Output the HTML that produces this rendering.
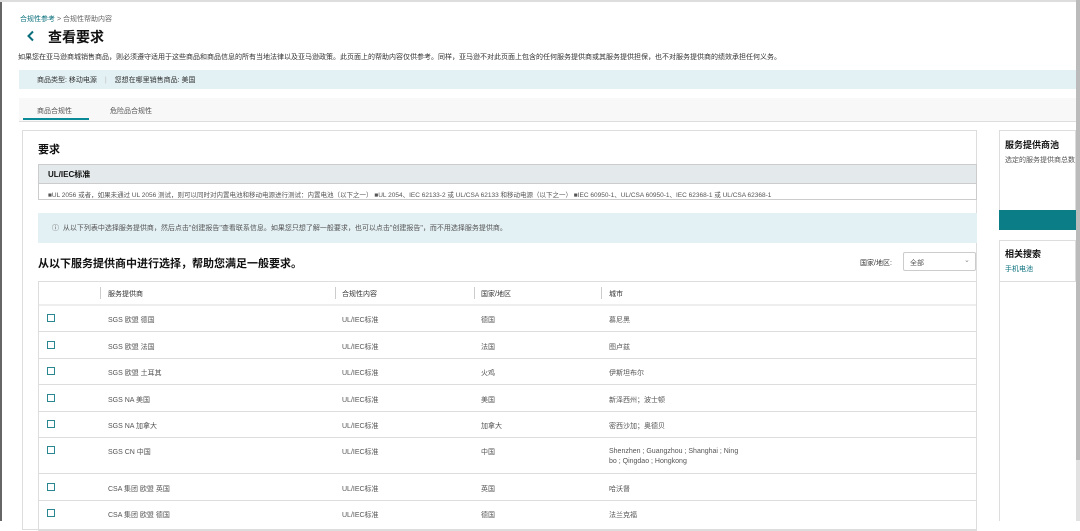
<!DOCTYPE html>
<html><head><meta charset="utf-8"><style>
*{box-sizing:border-box;margin:0;padding:0}
body{width:1080px;height:521px;overflow:hidden;background:#fff;font-family:"Liberation Sans","Noto Sans CJK SC",sans-serif;color:#111;position:relative;font-size:7px}
.a{position:absolute;white-space:nowrap}
.t{color:#555}
.cb{position:absolute;width:8px;height:8px;border:1.3px solid #2a8690}
</style></head><body>
<div class="a" style="left:0;top:0;width:2px;height:521px;background:#666"></div>
<div class="a" style="left:0;top:0;width:1080px;height:2px;background:#ddd"></div>
<div class="a" style="left:1076px;top:0;width:4px;height:460px;background:#bbb"></div>
<div class="a" style="left:1076px;top:460px;width:4px;height:61px;background:#e2e2e2"></div>
<div class="a" style="left:20px;top:14px;color:#0a6f7c">合规性参考 <span style="color:#666">&gt; 合规性帮助内容</span></div>
<svg class="a" style="left:26px;top:30px" width="10" height="12" viewBox="0 0 10 12"><path d="M7 1.5 L2.5 6 L7 10.5" fill="none" stroke="#0a6f7c" stroke-width="2"/></svg>
<div class="a" style="left:48px;top:27px;font-size:14px;font-weight:bold">查看要求</div>
<div class="a t" style="left:18px;top:52px;color:#333">如果您在亚马逊商城销售商品，则必须遵守适用于这些商品和商品信息的所有当地法律以及亚马逊政策。此页面上的帮助内容仅供参考。同样，亚马逊不对此页面上包含的任何服务提供商或其服务提供担保，也不对服务提供商的绩效承担任何义务。</div>
<div class="a" style="left:19px;top:70px;width:1057px;height:19px;background:#e3f0f4"></div>
<div class="a" style="left:37px;top:75px;color:#333">商品类型: 移动电源 <span style="color:#bbb;margin:0 6px">|</span> 您想在哪里销售商品: 美国</div>
<div class="a" style="left:19px;top:98px;width:1057px;height:24px;background:#f8f8f8;border-bottom:1px solid #ddd"></div>
<div class="a t" style="left:37px;top:106px">商品合规性</div>
<div class="a t" style="left:110px;top:106px">危险品合规性</div>
<div class="a" style="left:23px;top:118px;width:66px;height:2px;background:#0a8a96"></div>
<div class="a" style="left:22px;top:130px;width:955px;height:400px;border:1px solid #ddd"></div>
<div class="a" style="left:38px;top:141px;font-size:11px;font-weight:bold">要求</div>
<div class="a" style="left:38px;top:164px;width:939px;height:36px;border:1px solid #ccc"></div>
<div class="a" style="left:39px;top:165px;width:937px;height:19px;background:#e4e9eb;border-bottom:1px solid #ccc"></div>
<div class="a" style="left:48px;top:169px;font-size:8px;font-weight:bold">UL/IEC标准</div>
<div class="a t" style="left:48px;top:189px;font-size:6.5px">■UL 2056 或者，如果未通过 UL 2056 测试，则可以同时对内置电池和移动电源进行测试：内置电池（以下之一） ■UL 2054、IEC 62133-2 或 UL/CSA 62133 和移动电源（以下之一） ■IEC 60950-1、UL/CSA 60950-1、IEC 62368-1 或 UL/CSA 62368-1</div>
<div class="a" style="left:38px;top:213px;width:939px;height:30px;background:#e3f0f4"></div>
<div class="a t" style="left:52px;top:223px">ⓘ&nbsp; 从以下列表中选择服务提供商，然后点击"创建报告"查看联系信息。如果您只想了解一般要求，也可以点击"创建报告"，而不用选择服务提供商。</div>
<div class="a" style="left:38px;top:255px;font-size:11px;font-weight:bold">从以下服务提供商中进行选择，帮助您满足一般要求。</div>
<div class="a" style="left:860px;top:258px;color:#333">国家/地区:</div>
<div class="a" style="left:903px;top:252px;width:73px;height:19px;border:1px solid #ccc;border-radius:2px"></div>
<div class="a t" style="left:910px;top:258px">全部</div>
<div class="a" style="left:964px;top:256px;color:#888">⌄</div>
<div class="a" style="left:38px;top:281px;width:939px;height:250px;border:1px solid #ddd"></div>
<div class="a" style="left:39px;top:304px;width:937px;height:2px;background:#eee"></div>
<div class="a t" style="left:108px;top:289px;color:#333">服务提供商</div>
<div class="a t" style="left:342px;top:289px;color:#333">合规性内容</div>
<div class="a t" style="left:481px;top:289px;color:#333">国家/地区</div>
<div class="a t" style="left:609px;top:289px;color:#333">城市</div>
<div class="a" style="left:100px;top:287px;width:1px;height:12px;background:#ccc"></div>
<div class="a" style="left:335px;top:287px;width:1px;height:12px;background:#ccc"></div>
<div class="a" style="left:474px;top:287px;width:1px;height:12px;background:#ccc"></div>
<div class="a" style="left:601px;top:287px;width:1px;height:12px;background:#ccc"></div>
<div class="a" style="left:999px;top:130px;width:77px;height:100px;border:1px solid #ddd"></div>
<div class="a" style="left:1005px;top:138px;font-size:9px;font-weight:bold">服务提供商池</div>
<div class="a t" style="left:1005px;top:155px;width:70px;overflow:hidden">选定的服务提供商总数</div>
<div class="a" style="left:999px;top:210px;width:77px;height:20px;background:#0b7d86"></div>
<div class="a" style="left:999px;top:240px;width:77px;height:42px;border:1px solid #ddd"></div>
<div class="a" style="left:1005px;top:247px;font-size:9px;font-weight:bold">相关搜索</div>
<div class="a" style="left:1005px;top:264px;color:#0a6f7c">手机电池</div>
<div class="a" style="left:999px;top:282px;width:1px;height:239px;background:#ddd"></div>

<div class="a" style="left:39px;top:331px;width:937px;height:1px;background:#ddd"></div>
<div class="a" style="left:39px;top:358px;width:937px;height:1px;background:#ddd"></div>
<div class="a" style="left:39px;top:384px;width:937px;height:1px;background:#ddd"></div>
<div class="a" style="left:39px;top:411px;width:937px;height:1px;background:#ddd"></div>
<div class="a" style="left:39px;top:437px;width:937px;height:1px;background:#ddd"></div>
<div class="a" style="left:39px;top:473px;width:937px;height:1px;background:#ddd"></div>
<div class="a" style="left:39px;top:500px;width:937px;height:1px;background:#ddd"></div>

<div class="cb" style="left:47px;top:314px"></div><div class="a t" style="left:108px;top:315px">SGS 欧盟 德国</div><div class="a t" style="left:342px;top:315px">UL/IEC标准</div><div class="a t" style="left:481px;top:315px">德国</div><div class="a t" style="left:609px;top:315px">慕尼黑</div>
<div class="cb" style="left:47px;top:341px"></div><div class="a t" style="left:108px;top:342px">SGS 欧盟 法国</div><div class="a t" style="left:342px;top:342px">UL/IEC标准</div><div class="a t" style="left:481px;top:342px">法国</div><div class="a t" style="left:609px;top:342px">图卢兹</div>
<div class="cb" style="left:47px;top:367px"></div><div class="a t" style="left:108px;top:368px">SGS 欧盟 土耳其</div><div class="a t" style="left:342px;top:368px">UL/IEC标准</div><div class="a t" style="left:481px;top:368px">火鸡</div><div class="a t" style="left:609px;top:368px">伊斯坦布尔</div>
<div class="cb" style="left:47px;top:394px"></div><div class="a t" style="left:108px;top:395px">SGS NA 美国</div><div class="a t" style="left:342px;top:395px">UL/IEC标准</div><div class="a t" style="left:481px;top:395px">美国</div><div class="a t" style="left:609px;top:395px">新泽西州；波士顿</div>
<div class="cb" style="left:47px;top:420px"></div><div class="a t" style="left:108px;top:421px">SGS NA 加拿大</div><div class="a t" style="left:342px;top:421px">UL/IEC标准</div><div class="a t" style="left:481px;top:421px">加拿大</div><div class="a t" style="left:609px;top:421px">密西沙加；奥德贝</div>
<div class="cb" style="left:47px;top:446px"></div><div class="a t" style="left:108px;top:447px">SGS CN 中国</div><div class="a t" style="left:342px;top:447px">UL/IEC标准</div><div class="a t" style="left:481px;top:447px">中国</div><div class="a t" style="left:609px;top:447px;line-height:10px">Shenzhen ; Guangzhou ; Shanghai ; Ning<br>bo ; Qingdao ; Hongkong</div>
<div class="cb" style="left:47px;top:483px"></div><div class="a t" style="left:108px;top:484px">CSA 集团 欧盟 英国</div><div class="a t" style="left:342px;top:484px">UL/IEC标准</div><div class="a t" style="left:481px;top:484px">英国</div><div class="a t" style="left:609px;top:484px">哈沃督</div>
<div class="cb" style="left:47px;top:509px"></div><div class="a t" style="left:108px;top:510px">CSA 集团 欧盟 德国</div><div class="a t" style="left:342px;top:510px">UL/IEC标准</div><div class="a t" style="left:481px;top:510px">德国</div><div class="a t" style="left:609px;top:510px">法兰克福</div>
</body></html>
